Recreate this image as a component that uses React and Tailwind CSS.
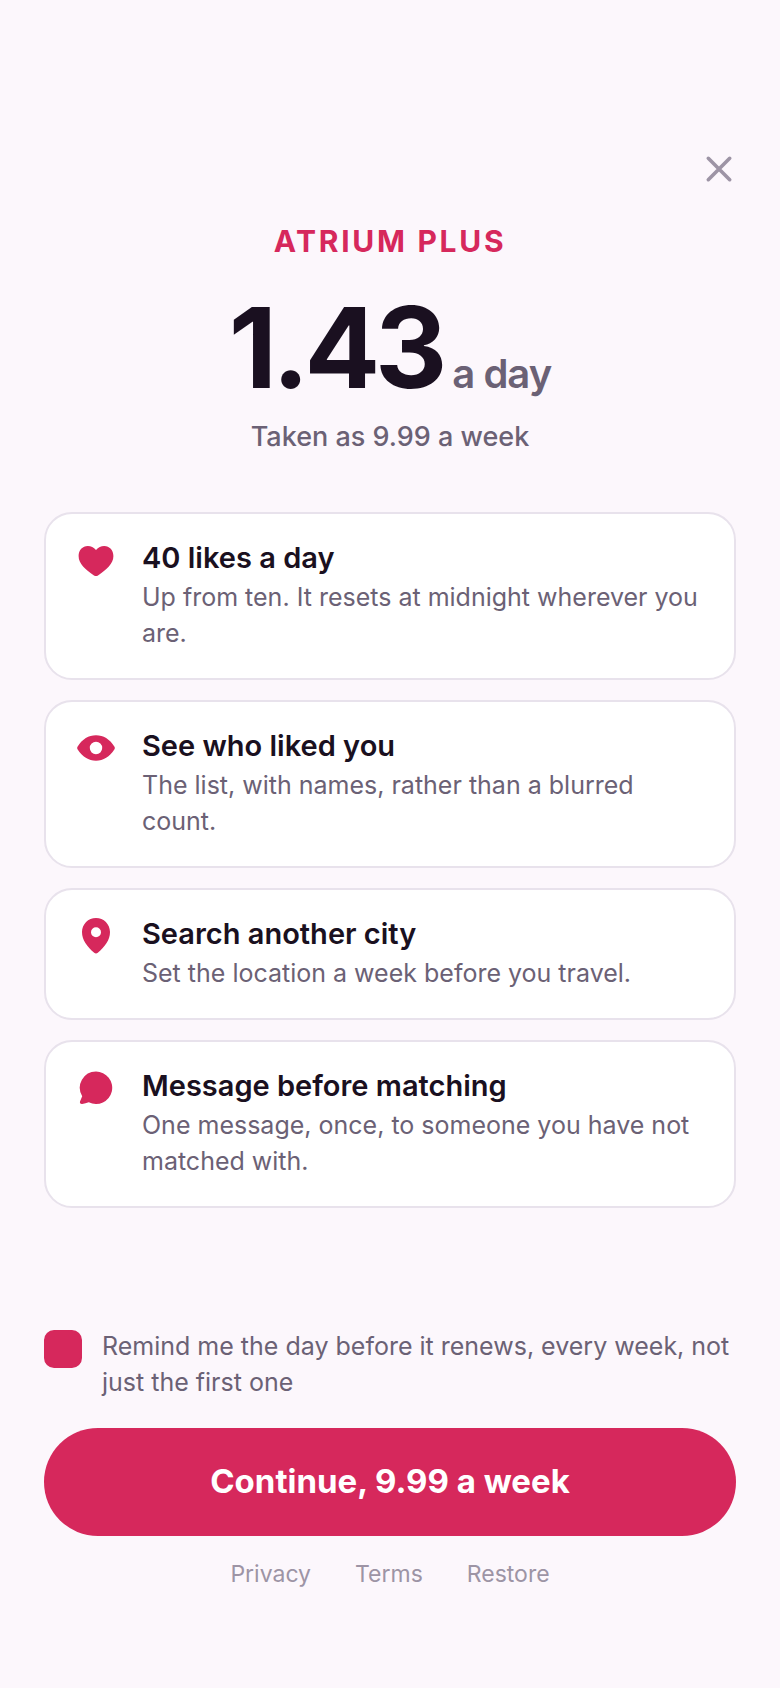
import React, { useState } from "react";

const HeartIcon = () => (
  <path d="M22 10C24.3 7.3 27 6 30.2 6C35.5 6 39.4 10.2 39.4 16C39.4 24 32.5 29.5 24 35.4Q22 36.6 20 35.4C11.5 29.5 4.6 24 4.6 16C4.6 10.2 8.5 6 13.8 6C17 6 19.7 7.3 22 10Z" />
);

const EyeIcon = () => (
  <path
    fillRule="evenodd"
    d="M3.5 21.3Q2.7 20 3.5 18.7C8.5 11 14.5 7.3 22 7.3C29.5 7.3 35.5 11 40.5 18.7Q41.3 20 40.5 21.3C35.5 29 29.5 32.7 22 32.7C14.5 32.7 8.5 29 3.5 21.3ZM22 13.8A6.2 6.2 0 1 0 22 26.2A6.2 6.2 0 1 0 22 13.8Z"
  />
);

const PinIcon = () => (
  <path
    fillRule="evenodd"
    d="M22 2C29.8 2 36 8.2 36 16C36 24 31 30.5 23.8 36.8Q22 38.2 20.2 36.8C13 30.5 8 24 8 16C8 8.2 14.2 2 22 2ZM22 11.3A5 5 0 1 0 22 21.3A5 5 0 1 0 22 11.3Z"
  />
);

const ChatIcon = () => (
  <path d="M22 3.6A16.2 16.2 0 1 1 14.8 34.3C12.6 35 10.4 35.6 8.2 35.9C6.5 36.1 5.6 35.1 6 33.6L8.2 28.2A16.2 16.2 0 0 1 22 3.6Z" />
);

const features = [
  {
    icon: HeartIcon,
    title: "40 likes a day",
    text: "Up from ten. It resets at midnight wherever you are.",
  },
  {
    icon: EyeIcon,
    title: "See who liked you",
    text: "The list, with names, rather than a blurred count.",
  },
  {
    icon: PinIcon,
    title: "Search another city",
    text: "Set the location a week before you travel.",
  },
  {
    icon: ChatIcon,
    title: "Message before matching",
    text: "One message, once, to someone you have not matched with.",
  },
];

function Feature({ icon: Icon, title, text }) {
  return (
    <li className="flex items-start gap-6 rounded-[28px] border-2 border-[#e8e2ec] bg-white px-7 pt-[26px] pb-[27px]">
      <svg viewBox="0 0 44 40" className="h-10 w-11 shrink-0 fill-[#d6285c]" aria-hidden="true">
        <Icon />
      </svg>
      <div className="min-w-0 flex-1">
        <h2 className="mb-[3px] text-[29px] leading-9 font-semibold">{title}</h2>
        <p className="text-[25px] leading-9 text-[#6b6175]">{text}</p>
      </div>
    </li>
  );
}

export default function App() {
  const [remind, setRemind] = useState(true);

  return (
    <div className="flex min-h-screen flex-col bg-[#fcf7fc] px-11 pt-38 pb-24 font-['Inter',sans-serif] text-[#1a1020]">
      <button type="button" aria-label="Close" className="self-end text-[#9d94a5]">
        <svg viewBox="0 0 34 34" className="size-[34px]" fill="none" stroke="currentColor" strokeWidth="3.6" strokeLinecap="round">
          <path d="M6.3 6.3L27.7 27.7M27.7 6.3L6.3 27.7" />
        </svg>
      </button>

      <header className="mt-[37px] text-center">
        <p className="text-[30px] leading-9 font-bold tracking-[0.09em] text-[#d6285c]">ATRIUM PLUS</p>
        <h1 className="mt-8 flex items-baseline justify-center gap-2.5">
          <span className="text-[112px] leading-none font-bold tracking-[-0.045em]">1.43</span>
          <span className="text-[40px] leading-none font-semibold tracking-tight text-[#6b6175]">a day</span>
        </h1>
        <p className="mt-4 text-[27px] leading-9 font-medium text-[#6b6175]">Taken as 9.99 a week</p>
      </header>

      <ul className="mt-[57px] flex flex-col gap-5">
        {features.map((f) => (
          <Feature key={f.title} {...f} />
        ))}
      </ul>

      <footer className="mt-auto pt-10">
        <label className="flex items-start gap-5 text-[25px] leading-9 text-[#6b6175]">
          <input
            type="checkbox"
            checked={remind}
            onChange={(e) => setRemind(e.target.checked)}
            className="mt-0.5 size-[38px] shrink-0 appearance-none rounded-[10px] border-2 border-[#d6285c] checked:bg-[#d6285c]"
          />
          <span>Remind me the day before it renews, every week, not just the first one</span>
        </label>
        <button type="button" className="mt-7 h-27 w-full rounded-full bg-[#d6285c] text-[33px] font-bold text-white">
          Continue, 9.99 a week
        </button>
        <nav className="mt-5 flex justify-center gap-11 text-[23px] leading-9 text-[#9d94a5]">
          <a href="#privacy">Privacy</a>
          <a href="#terms">Terms</a>
          <a href="#restore">Restore</a>
        </nav>
      </footer>
    </div>
  );
}
